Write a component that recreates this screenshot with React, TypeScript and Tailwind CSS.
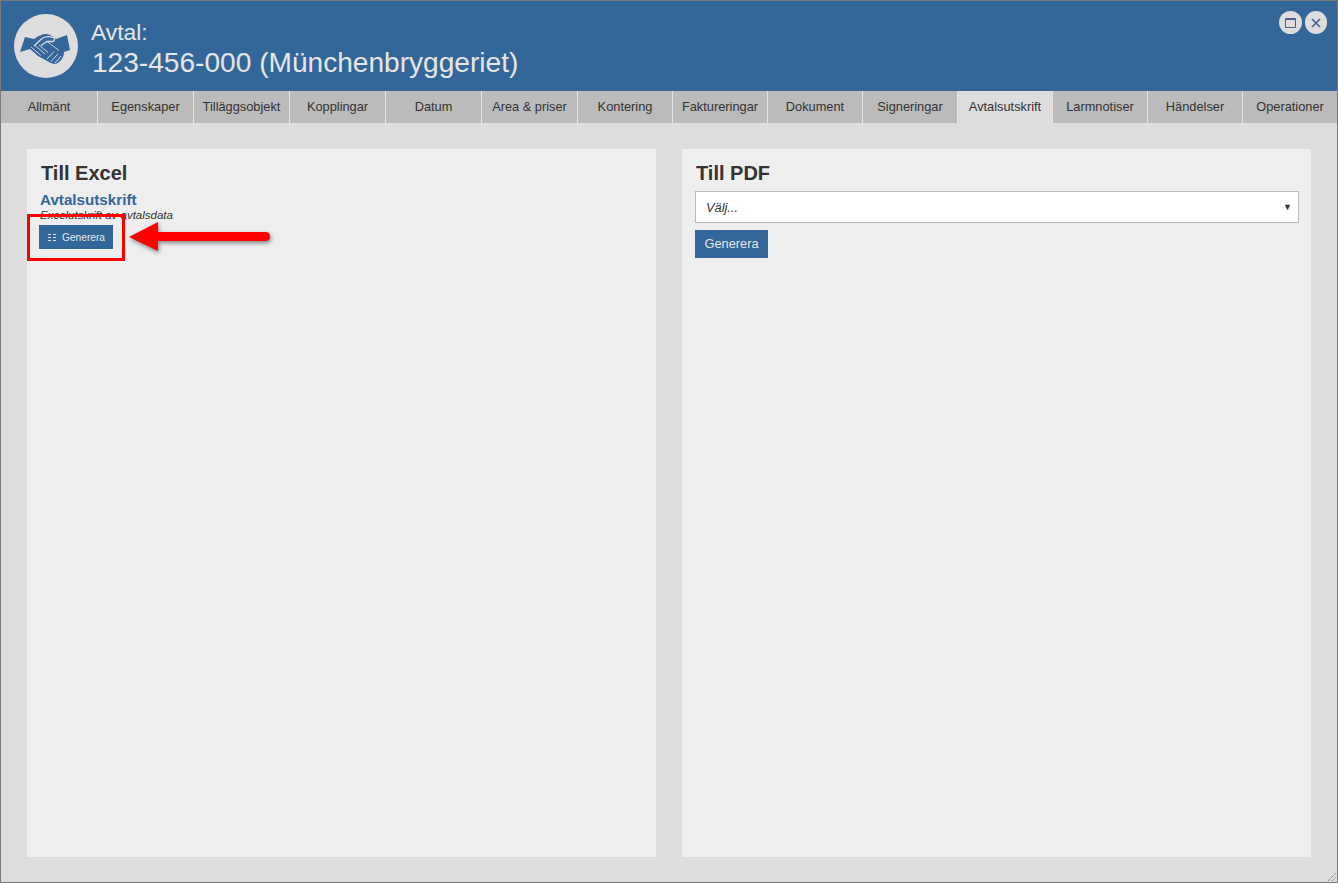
const TABS = [
  { label: 'Allmänt', width: 'w-[96px]' },
  { label: 'Egenskaper', width: 'w-[96px]' },
  { label: 'Tilläggsobjekt', width: 'w-[96px]' },
  { label: 'Kopplingar', width: 'w-[96px]' },
  { label: 'Datum', width: 'w-[96px]' },
  { label: 'Area & priser', width: 'w-[96px]' },
  { label: 'Kontering', width: 'w-[95px]' },
  { label: 'Faktureringar', width: 'w-[95px]' },
  { label: 'Dokument', width: 'w-[95px]' },
  { label: 'Signeringar', width: 'w-[95px]' },
  { label: 'Avtalsutskrift', width: 'w-[95px]' },
  { label: 'Larmnotiser', width: 'w-[95px]' },
  { label: 'Händelser', width: 'w-[95px]' },
  { label: 'Operationer', width: 'w-[95px]' },
];

function HandshakeIcon() {
  return (
    <svg width="64" height="64" viewBox="14 14 64 64" aria-hidden="true">
      <path
        d="M20 52L25 37L34 39C38 36 42 34 46 34C50 34 53 37 56 39L67 35L70 50L64 52C64 56 62 60 59 62C56 65 52 64 49 62L38 56L30 49Z"
        fill="#336699"
      />
      <path d="M34 46L42 38.5C45 36.5 50 36 53 37.5C55 38.5 55 41 53 41.5L47 41.5L41 45.5" fill="none" stroke="#dddddd" strokeWidth="1.3" />
      <path d="M31 47L41 55.5M35 45.5L45 54M39 45L48 52.5M47 41.5L59 50.5" fill="none" stroke="#dddddd" strokeWidth="0.9" />
      <path d="M47 59L54 51.5M51 61.5L58 54M55 63L61 56" fill="none" stroke="#dddddd" strokeWidth="1" />
    </svg>
  );
}

function ListIcon() {
  return (
    <svg width="8" height="7" viewBox="0 0 8 7" className="shrink-0" aria-hidden="true">
      <path d="M0 .5h3M5 .5h3M0 3.5h3M5 3.5h3M0 6.5h3M5 6.5h3" stroke="#dfe6ee" strokeWidth="1" fill="none" />
    </svg>
  );
}

function Arrow() {
  return (
    <svg
      width="150"
      height="64"
      viewBox="0 0 150 64"
      className="absolute left-[128px] top-[205px] drop-shadow-[1px_2px_2px_rgba(0,0,0,0.45)]"
      aria-hidden="true"
    >
      <path d="M0 31L29 16L29 26L136 26Q141 26 141 30.5Q141 35 136 35L29 35L29 45Z" fill="#ff0000" />
    </svg>
  );
}

export default function App() {
  return (
    <div className="relative flex h-[883px] w-[1338px] flex-col overflow-hidden border border-[#7b7b7b] bg-[#dddddd] font-['Liberation_Sans',Arial,sans-serif]">
      <header className="relative flex h-[90px] shrink-0 items-start bg-[#336699] pl-[13px] pt-[13px]">
        <div className="h-[64px] w-[64px] rounded-full bg-[#dddddd]">
          <HandshakeIcon />
        </div>
        <div className="ml-[13px] pt-[4px] text-[#e6e6e6]">
          <div className="text-[22.8px] leading-[28px]">Avtal:</div>
          <div className="ml-px mt-px text-[28.1px] leading-[32px]">123-456-000 (Münchenbryggeriet)</div>
        </div>
        <div className="absolute right-[10px] top-[10px] flex gap-[3px]">
          <button type="button" className="flex h-[23px] w-[23px] items-center justify-center rounded-full bg-[#dddddd]" aria-label="Maximera">
            <svg width="11" height="10" viewBox="0 0 11 10" aria-hidden="true">
              <path d="M.5 .5h10v9H.5z" fill="none" stroke="#4a5f8f" strokeWidth="1" />
              <path d="M0 1.5h11" stroke="#4a5f8f" strokeWidth="1" />
            </svg>
          </button>
          <button type="button" className="flex h-[23px] w-[22px] items-center justify-center rounded-full bg-[#dddddd]" aria-label="Stäng">
            <svg width="10" height="10" viewBox="0 0 10 10" aria-hidden="true">
              <path d="M1 1l8 8M9 1l-8 8" stroke="#4a5f8f" strokeWidth="1.6" fill="none" />
            </svg>
          </button>
        </div>
      </header>

      <nav className="flex h-[32px] shrink-0 bg-[#bbbbbb]">
        {TABS.map((tab, i) => (
          <div
            key={tab.label}
            className={`flex shrink-0 items-center justify-center whitespace-nowrap text-[12.8px] text-[#333333] ${tab.width} ${
              i > 0 ? 'border-l border-[#e4e4e4]' : ''
            } ${tab.label === 'Avtalsutskrift' ? 'bg-[#dddddd]' : ''}`}
          >
            {tab.label}
          </div>
        ))}
      </nav>

      <main className="grid min-h-0 flex-1 grid-cols-2 gap-[26px] px-[26px] pb-[25px] pt-[26px]">
        <section className="bg-[#eeeeee] pl-[13px] pt-[12px]">
          <h2 className="pl-px text-[20px] font-bold leading-[24px] text-[#333333]">Till Excel</h2>
          <div className="mt-[7px] text-[15.2px] font-bold leading-[16px] text-[#336699]">Avtalsutskrift</div>
          <div className="text-[11.5px] italic leading-[14px] text-[#333333]">Excelutskrift av avtalsdata</div>
          <button
            type="button"
            className="-ml-px mt-[3px] flex h-[24px] w-[74px] items-center gap-[6px] bg-[#336699] pl-[9px] pt-px text-[10.2px] text-[#e6e6e6]"
          >
            <ListIcon />
            Generera
          </button>
        </section>

        <section className="bg-[#eeeeee] pl-[13px] pr-[12px] pt-[12px]">
          <h2 className="pl-px text-[20px] font-bold leading-[24px] text-[#333333]">Till PDF</h2>
          <div className="mt-[6px] flex h-[32px] items-center justify-between border border-[#bbbbbb] bg-white pl-[10px] pr-[6px] pt-[2px] text-[12.8px] italic text-[#333333]">
            <span>Välj...</span>
            <span className="text-[9px] not-italic">▼</span>
          </div>
          <button type="button" className="mt-[7px] block h-[28px] w-[73px] bg-[#336699] text-[12.8px] text-[#e6e6e6]">
            Generera
          </button>
        </section>
      </main>

      {/* markering ovanpa skarmbilden */}
      <div className="absolute left-[26px] top-[213px] h-[47px] w-[98px] border-[3px] border-[#ff0000]" />
      <Arrow />

      <svg width="10" height="10" viewBox="0 0 10 10" className="absolute bottom-0 right-0" aria-hidden="true">
        <path d="M1 9L9 1M5 9L9 5" stroke="#666" strokeWidth="1" strokeDasharray="1 1" fill="none" />
      </svg>
    </div>
  );
}
